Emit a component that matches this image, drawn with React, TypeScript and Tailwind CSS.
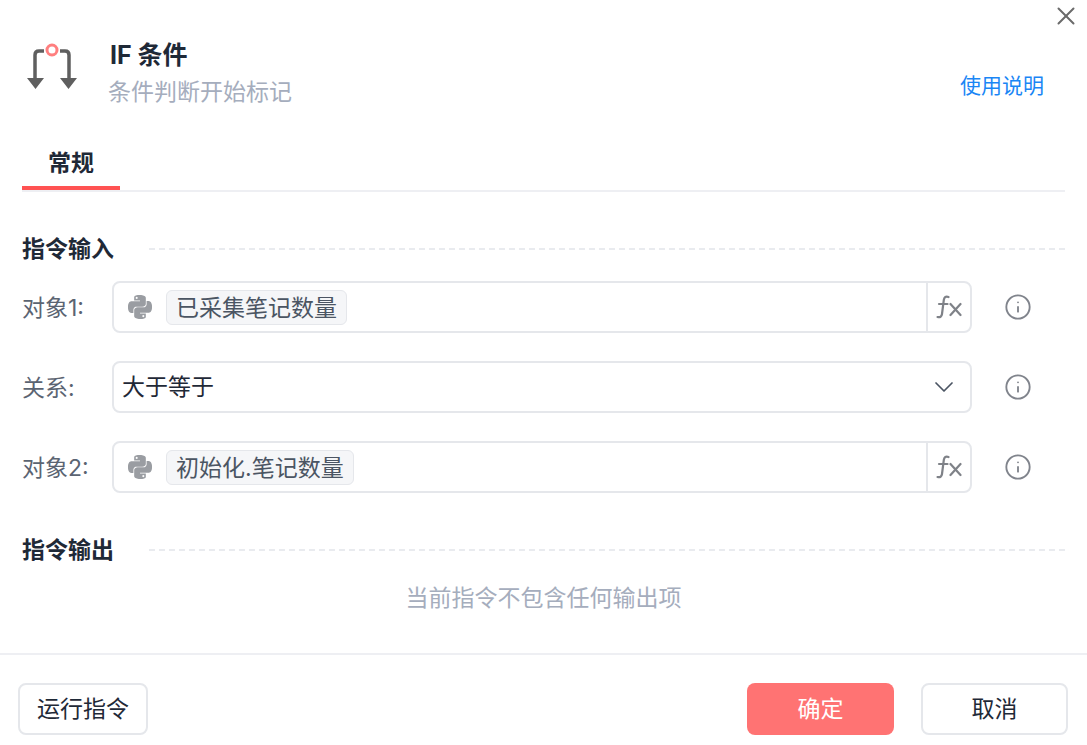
import React from 'react';
import { X, ChevronDown, Info } from 'lucide-react';
import { SiPython } from 'react-icons/si';

const FONT = 'font-["Inter","Noto_Sans_CJK_SC",sans-serif]';

const BranchIcon: React.FC = () => (
  <svg width="54" height="48" viewBox="0 0 54 48" fill="none">
    <path d="M10 37V13Q10 9 14 9H19M35 9H40Q44 9 44 13V37" stroke="#5f5f5f" strokeWidth="3.5" />
    <path d="M2 36H19L10.5 47ZM35 36H52L43.5 47Z" fill="#5f5f5f" />
    <circle cx="27" cy="8" r="5" stroke="#ff7f7f" strokeWidth="3" />
  </svg>
);

const FxIcon: React.FC = () => (
  <svg width="26" height="24" viewBox="0 0 26 24" fill="none" stroke="#7f8288" strokeWidth="2.2" strokeLinecap="round">
    <path d="M12.5 2Q8.5 0.5 7.8 5L6 19Q5.4 23 1.5 22" />
    <path d="M3 9H11.5" />
    <path d="M14.5 9L24.5 20M24.5 9L14.5 20" />
  </svg>
);

const SectionTitle: React.FC<{ title: string }> = ({ title }) => (
  <div className="flex items-center">
    <h3 className="w-[127px] text-[23px] leading-[32px] font-bold text-[#1f2937]">{title}</h3>
    <div className="flex-1 border-t-2 border-dashed border-[#e9ebef]" />
  </div>
);

const VariableInput: React.FC<{ label: string; value: string }> = ({ label, value }) => (
  <div className="flex h-[52px] items-center">
    <label className="w-[90px] pt-[2px] text-[23px] text-[#5b6472]">{label}</label>
    <div className="flex h-full w-[860px] items-center rounded-lg border-2 border-[#e5e7eb]">
      <div className="flex flex-1 items-center pl-[14px]">
        <SiPython size={24} className="text-[#9a9da2]" />
        <span className="ml-[14px] flex h-[35px] items-center rounded-md border border-[#e5e7eb] bg-[#f5f6f8] px-[9px] pt-[3px] text-[23px] text-[#4b5563]">
          {value}
        </span>
      </div>
      <div className="flex h-full w-[44px] items-center justify-center border-l-2 border-[#e5e7eb]">
        <FxIcon />
      </div>
    </div>
    <Info size={28} strokeWidth={1.6} className="ml-[32px] text-[#80848c]" />
  </div>
);

const SelectInput: React.FC<{ label: string; value: string }> = ({ label, value }) => (
  <div className="flex h-[52px] items-center">
    <label className="w-[90px] pt-[2px] text-[23px] text-[#5b6472]">{label}</label>
    <div className="flex h-full w-[860px] items-center justify-between rounded-lg border-2 border-[#e5e7eb] pr-[10px] pl-[8px]">
      <span className="text-[23px] text-[#1f2937]">{value}</span>
      <ChevronDown size={32} strokeWidth={1.3} className="text-[#4b5563]" />
    </div>
    <Info size={28} strokeWidth={1.6} className="ml-[32px] text-[#80848c]" />
  </div>
);

export default function App() {
  return (
    <div className={`${FONT} relative flex h-[745px] w-[1087px] flex-col overflow-hidden bg-white`}>
      <button className="absolute top-[1px] right-[6px] text-[#6b6b6b]">
        <X size={30} strokeWidth={1.6} />
      </button>

      <header className="flex h-[186px] flex-col px-[22px]">
        <div className="flex items-start pt-[38px]">
          <div className="mt-[4px] w-[86px] pl-[3px]">
            <BranchIcon />
          </div>
          <div className="flex-1">
            <h2 className="pl-[2px] text-[25px] leading-[34px] font-bold text-[#1f2937]">IF 条件</h2>
            <p className="mt-[3px] text-[23px] leading-[34px] text-[#a5adbd]">条件判断开始标记</p>
          </div>
          <a className="mt-[31px] mr-[21px] text-[21px] leading-[34px] text-[#1a86f5]">使用说明</a>
        </div>
      </header>

      <div className="mx-[22px] border-b-2 border-[#eeeff3]">
        <div className="-mt-[46px] flex h-[50px] w-[98px] items-center justify-center border-b-4 border-[#ff5252] text-[23px] font-bold text-[#1f2937]">
          常规
        </div>
      </div>

      <main className="flex flex-1 flex-col px-[22px] pt-[41px]">
        <SectionTitle title="指令输入" />
        <div className="mt-[16px] flex flex-col gap-[28px]">
          <VariableInput label="对象1:" value="已采集笔记数量" />
          <SelectInput label="关系:" value="大于等于" />
          <VariableInput label="对象2:" value="初始化.笔记数量" />
        </div>
        <div className="mt-[41px]">
          <SectionTitle title="指令输出" />
        </div>
        <p className="mt-[16px] text-center text-[23px] leading-[32px] text-[#a5adbd]">当前指令不包含任何输出项</p>
      </main>

      <footer className="flex h-[92px] items-start justify-between border-t-2 border-[#eeeff3] pt-[28px] pr-[19px] pl-[18px]">
        <button className="h-[52px] w-[130px] rounded-lg border-2 border-[#e5e7eb] text-[23px] text-[#1f2937]">
          运行指令
        </button>
        <div className="flex gap-[27px]">
          <button className="h-[52px] w-[147px] rounded-lg bg-[#ff7373] text-[23px] text-white">确定</button>
          <button className="h-[52px] w-[147px] rounded-lg border-2 border-[#e5e7eb] text-[23px] text-[#1f2937]">
            取消
          </button>
        </div>
      </footer>
    </div>
  );
}
